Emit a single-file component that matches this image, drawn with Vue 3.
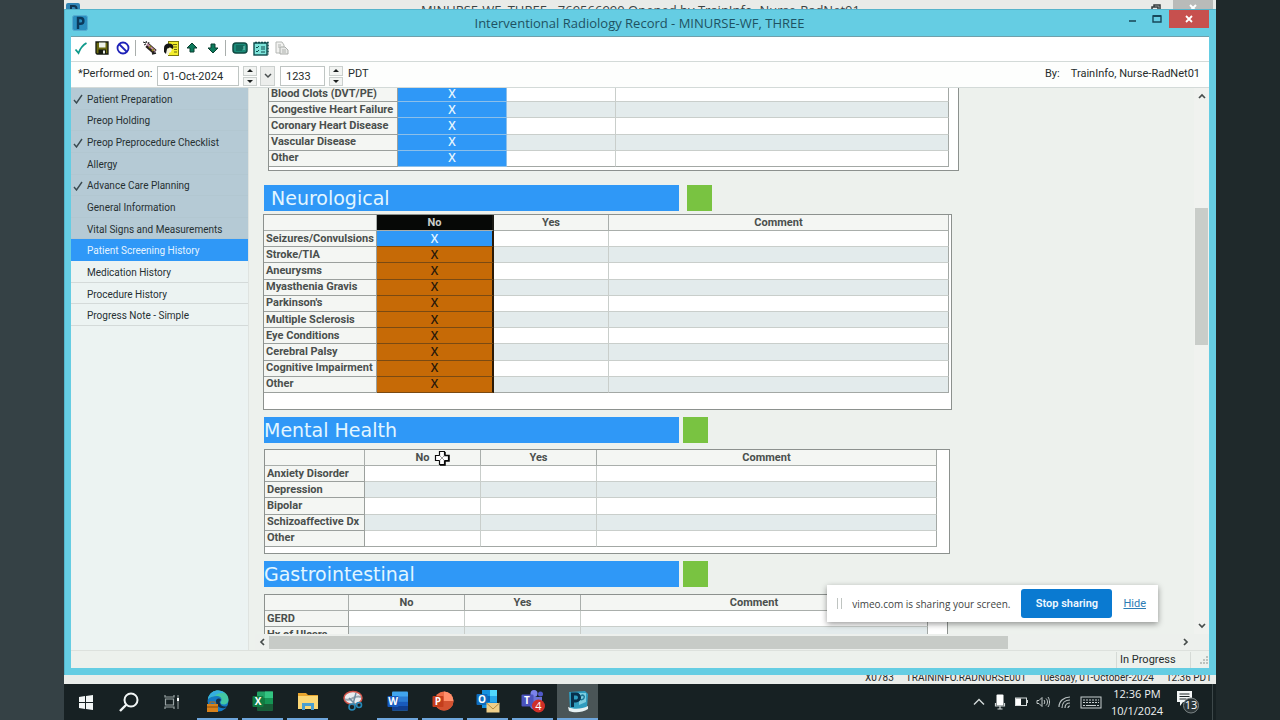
<script setup>
import { ref } from 'vue'

const performedDate = ref('01-Oct-2024')
const performedTime = ref('1233')

const navItems = [
  { label: 'Patient Preparation', done: true, visited: true },
  { label: 'Preop Holding', visited: true },
  { label: 'Preop Preprocedure Checklist', done: true, visited: true },
  { label: 'Allergy', visited: true },
  { label: 'Advance Care Planning', done: true, visited: true },
  { label: 'General Information', visited: true },
  { label: 'Vital Signs and Measurements', visited: true },
  { label: 'Patient Screening History', active: true },
  { label: 'Medication History' },
  { label: 'Procedure History' },
  { label: 'Progress Note - Simple' },
]

const sections = [
  {
    id: 'cardio',
    head: false,
    mark: 'blue',
    rows: ['Blood Clots (DVT/PE)', 'Congestive Heart Failure', 'Coronary Heart Disease', 'Vascular Disease', 'Other'],
  },
  {
    id: 'neuro',
    title: 'Neurological',
    head: true,
    mark: 'orange',
    rows: ['Seizures/Convulsions', 'Stroke/TIA', 'Aneurysms', 'Myasthenia Gravis', "Parkinson's", 'Multiple Sclerosis', 'Eye Conditions', 'Cerebral Palsy', 'Cognitive Impairment', 'Other'],
  },
  {
    id: 'mental',
    title: 'Mental Health',
    head: true,
    rows: ['Anxiety Disorder', 'Depression', 'Bipolar', 'Schizoaffective Dx', 'Other'],
  },
  {
    id: 'gastro',
    title: 'Gastrointestinal',
    head: true,
    rows: ['GERD', 'Hx of Ulcers'],
  },
]
</script>

<template>
  <div class="desktop">
    <div class="stage">
      <div class="back-title">
        <svg class="back-logo" width="14" height="14" viewBox="0 0 14 14"><rect width="14" height="14" rx="2" fill="#2f83b4" /><path d="M5 13V3h3a2.500 2.500 0 0 1 0 5H5" fill="none" stroke="#0d3551" stroke-width="2" /></svg>
        <span class="back-name">MINURSE-WF, THREE - 769566990 Opened by TrainInfo, Nurse-RadNet01</span>
        <svg class="back-restore" width="10" height="9" viewBox="0 0 10 9"><path d="M3 3V1h6v6H7M1 3h6v6H1z" fill="none" stroke="#333b3b" stroke-width="1.500" /></svg>
        <span class="back-close"><svg width="8" height="8" viewBox="0 0 8 8"><path d="M1 1l6 6M7 1L1 7" stroke="#fff" stroke-width="2" /></svg></span>
      </div>

      <section class="window">
        <header class="titlebar">
          <svg class="logo" width="16" height="16" viewBox="0 0 16 16"><rect x="0.500" y="0.500" width="15" height="15" rx="2" fill="#2b8fc0" stroke="#55abd0" /><path d="M6 14V3h2.500a2.800 2.800 0 0 1 0 5.800H6" fill="none" stroke="#0b3a5c" stroke-width="2.400" /></svg>
          <h1>Interventional Radiology Record - MINURSE-WF, THREE</h1>
          <div class="winbtns">
            <button type="button" aria-label="Minimize"><svg width="10" height="10" viewBox="0 0 10 10"><path d="M1 7h7" stroke="#2a6577" stroke-width="2" /></svg></button>
            <button type="button" aria-label="Maximize"><svg width="10" height="10" viewBox="0 0 10 10"><path d="M1 2h8v6H1z" fill="none" stroke="#17485a" stroke-width="1.400" /><path d="M1 2h8" stroke="#17485a" stroke-width="2" /></svg></button>
            <button type="button" class="close" aria-label="Close"><svg width="8" height="8" viewBox="0 0 8 8"><path d="M1 1l6 6M7 1L1 7" stroke="#fff" stroke-width="1.800" /></svg></button>
          </div>
        </header>

        <div class="client">
          <div class="toolbar">
            <button type="button" aria-label="Sign"><svg width="14" height="14" viewBox="0 0 14 14"><path d="M1.500 8.500L4.500 12C6 8 9 4 12.500 2" fill="none" stroke="#0f9a8c" stroke-width="1.800" /></svg></button>
            <button type="button" aria-label="Save"><svg width="14" height="14" viewBox="0 0 14 14"><path d="M1 1h12v12H2l-1-1z" fill="#6b6a10" stroke="#151a10" stroke-width="1.300" /><rect x="4" y="1.500" width="6.500" height="5" fill="#eef2ea" /><rect x="3.500" y="8.500" width="7.500" height="4.500" fill="#151a10" /><rect x="8" y="9.500" width="2" height="3" fill="#e8ece4" /></svg></button>
            <button type="button" aria-label="Cancel"><svg width="14" height="14" viewBox="0 0 14 14"><circle cx="7" cy="7" r="5.500" fill="none" stroke="#1f22b8" stroke-width="1.800" /><path d="M3 3l8 8" stroke="#1f22b8" stroke-width="1.800" /></svg></button>
            <i class="sep"></i>
            <button type="button" aria-label="Clear"><svg width="16" height="16" viewBox="0 0 16 16"><path d="M1 2l3 1M2 5l2-1M4 1l1 2M7 2l-1 2" stroke="#1d1d1d" stroke-width="1" /><path d="M5 5l8 7" stroke="#2a2020" stroke-width="5" /><path d="M5 4l8 7" stroke="#c28da0" stroke-width="2" /><path d="M7 8l2-2M10 11l2-2" stroke="#8d8b18" stroke-width="1.500" /><path d="M10 14l4-1" stroke="#1d1d1d" stroke-width="1.500" /></svg></button>
            <button type="button" aria-label="Patient notes"><svg width="16" height="15" viewBox="0 0 16 15"><rect x="5.500" y="0.500" width="10" height="14" fill="#f4ee2c" stroke="#79770f" /><path d="M10 3.500h4M11 6h3M11 8.500h3M11 11h3" stroke="#6a6810" stroke-width="1.200" /><path d="M1 11V7c0-3 2-4.500 5-4.500s4.500 1.500 4.500 4L9.500 8 7 6.500 4 8l-1 5z" fill="#161616" /><path d="M4 8l3-1.500L9 8l-1 3-2 1v2H4z" fill="#f7f5d5" /></svg></button>
            <button type="button" aria-label="Previous"><svg width="12" height="12" viewBox="0 0 12 12"><path d="M6 1l5 5H8v4H4V6H1z" fill="#0c7a5c" stroke="#0a3f30" /></svg></button>
            <button type="button" aria-label="Next"><svg width="12" height="12" viewBox="0 0 12 12"><path d="M6 11l5-5H8V2H4v4H1z" fill="#0c7a5c" stroke="#0a3f30" /></svg></button>
            <i class="sep"></i>
            <button type="button" aria-label="Keyboard"><svg width="16" height="12" viewBox="0 0 16 12"><rect x="1" y="1" width="14" height="10" rx="3" fill="#1b8a78" stroke="#0f4a42" stroke-width="1.500" /><path d="M4 4h8M4 6h8M4 8h6" stroke="#0f4a42" /><path d="M12 4v4" stroke="#8fd0c4" /></svg></button>
            <button type="button" aria-label="Task list"><svg width="16" height="15" viewBox="0 0 16 15"><rect x="1" y="2" width="13" height="12" fill="#7de4da" stroke="#0e4b4c" stroke-width="1.400" /><path d="M2 1.500h13v12" fill="none" stroke="#0e4b4c" stroke-dasharray="2 1" stroke-width="1.500" /><path d="M3 6l1 1 2-2M3 10l1 1 2-2" fill="none" stroke="#0e4b4c" /><path d="M8 6h4M8 8h4M8 11h4" stroke="#0e4b4c" /></svg></button>
            <button type="button" aria-label="Copy document"><svg width="14" height="14" viewBox="0 0 14 14"><path d="M1 1h6l2 3v8H1z" fill="#f2f2f0" stroke="#b5b8b5" /><path d="M5 6h5l3 3v4H5z" fill="#e9eae8" stroke="#a9aca9" /><path d="M3 4h3M3 6h2M7 9h4M7 11h4" stroke="#b0b3b0" /></svg></button>
          </div>

          <form class="performed" @submit.prevent>
            <label for="perf-date">*Performed on:</label>
            <input id="perf-date" v-model="performedDate" class="date" type="text" />
            <span class="spin"><button type="button" aria-label="Next day"><i class="up"></i></button><button type="button" aria-label="Previous day"><i class="down"></i></button></span>
            <button type="button" class="drop" aria-label="Open calendar"><svg width="8" height="6" viewBox="0 0 8 6"><path d="M1 1l3 3 3-3" fill="none" stroke="#4a5050" stroke-width="1.500" /></svg></button>
            <input id="perf-time" v-model="performedTime" class="time" type="text" aria-label="Time performed" />
            <span class="spin"><button type="button" aria-label="Later"><i class="up"></i></button><button type="button" aria-label="Earlier"><i class="down"></i></button></span>
            <span class="zone">PDT</span>
            <span class="by">By:</span>
            <span>TrainInfo, Nurse-RadNet01</span>
          </form>

          <div class="body">
            <nav class="sidebar">
              <ul>
                <li v-for="item in navItems" :key="item.label">
                  <a href="#" :class="{ visited: item.visited, active: item.active }">
                    <span class="tick"><svg v-if="item.done" width="10" height="10" viewBox="0 0 10 10"><path d="M1 6l2.500 3L9 1" fill="none" stroke="#3a4a50" stroke-width="1.400" /></svg></span>{{ item.label }}
                  </a>
                </li>
              </ul>
            </nav>

            <main class="pane">
              <div class="viewport">
                <section v-for="s in sections" :key="s.id" class="group" :class="s.id">
                  <div v-if="s.title" class="heading"><h2>{{ s.title }}</h2><span class="flag"></span></div>
                  <div class="box">
                    <table>
                      <colgroup><col class="c-label" /><col class="c-no" /><col class="c-yes" /><col /></colgroup>
                      <thead v-if="s.head">
                        <tr><th></th><th scope="col" :class="{ picked: s.mark === 'orange' }">No</th><th scope="col">Yes</th><th scope="col">Comment</th></tr>
                      </thead>
                      <tbody>
                        <tr v-for="(r, i) in s.rows" :key="r">
                          <th scope="row">{{ r }}</th>
                          <td :class="[s.mark, { first: i === 0 }]"><template v-if="s.mark">X</template></td>
                          <td></td>
                          <td></td>
                        </tr>
                      </tbody>
                    </table>
                  </div>
                </section>
                <svg class="cursor" width="16" height="16" viewBox="0 0 16 16"><path d="M5.500 1.500h5v4h4v5h-4v4h-5v-4h-4v-5h4z" fill="#fff" stroke="#0a0a0a" stroke-width="1.200" /><path d="M11 2v3.500h4V11h-4v4H6" fill="none" stroke="#0a0a0a" stroke-width="1.500" /><path d="M5.500 5.500l5 5M10.500 5.500l-5 5" stroke="#888" stroke-width="0.800" /></svg>
              </div>
              <div class="vscroll">
                <button type="button" aria-label="Scroll up"><svg width="8" height="6" viewBox="0 0 8 6"><path d="M1 5l3-3 3 3" fill="none" stroke="#464c4b" stroke-width="1.700" /></svg></button>
                <span class="vthumb"></span>
                <button type="button" aria-label="Scroll down"><svg width="8" height="6" viewBox="0 0 8 6"><path d="M1 1l3 3 3-3" fill="none" stroke="#464c4b" stroke-width="1.700" /></svg></button>
              </div>
              <div class="hscroll">
                <button type="button" aria-label="Scroll left"><svg width="6" height="8" viewBox="0 0 6 8"><path d="M5 1L2 4l3 3" fill="none" stroke="#464c4b" stroke-width="1.700" /></svg></button>
                <span class="htrack"><span class="hthumb"></span></span>
                <button type="button" aria-label="Scroll right"><svg width="6" height="8" viewBox="0 0 6 8"><path d="M1 1l3 3-3 3" fill="none" stroke="#464c4b" stroke-width="1.700" /></svg></button>
              </div>
            </main>
          </div>

          <footer class="status"><span class="state">In Progress</span><svg width="12" height="12" viewBox="0 0 12 12"><path d="M9 3h2M6 6h2M9 6h2M3 9h2M6 9h2M9 9h2" stroke="#bcc2be" stroke-width="2" /></svg></footer>
        </div>
      </section>

      <div class="back-status"><span>X0783</span><span>TRAININFO.RADNURSE001</span><span>Tuesday, 01-October-2024</span><span>12:36 PDT</span></div>

      <footer class="taskbar">
        <div class="sys">
          <button type="button" aria-label="Start"><svg width="16" height="16" viewBox="0 0 16 16"><path d="M1 3l6-1v6H1zM8 2l7-1v7H8zM1 9h6v6l-6-1zM8 9h7v7l-7-1z" fill="#f2f6f6" /></svg></button>
          <button type="button" aria-label="Search"><svg width="22" height="22" viewBox="0 0 22 22"><circle cx="13" cy="9" r="6.500" fill="none" stroke="#f2f6f6" stroke-width="2" /><path d="M8.500 13.500L2 20" stroke="#f2f6f6" stroke-width="2.400" /></svg></button>
          <button type="button" aria-label="Task view"><svg width="16" height="16" viewBox="0 0 16 16"><path d="M1 1v2h9V1M1 15v-2h9v2M1.500 5h8v6h-8z" fill="none" stroke="#99a3a4" stroke-width="1.200" /><path d="M14 1v14" stroke="#99a3a4" /><path d="M14 4v3" stroke="#fff" stroke-width="2" /></svg></button>
        </div>
        <div class="apps">
          <button type="button" class="run" aria-label="Edge"><svg width="24" height="24" viewBox="0 0 24 24"><circle cx="12" cy="12" r="10.500" fill="#1479c4" /><path d="M2 10C3 4 8 1.500 12 1.500c6 0 10.500 4 10.500 9 0 3-2 5-5 5-2 0-3-1-3-2 0-1 1-1 1-3 0-2-2-3.500-4.500-3.500C7 7 4 8 2 10z" fill="#43c7a2" /><path d="M2 10C3 4 8 1.500 12 1.500c3 0 5 1 7 3-5-1-8 0-10 2.500C6 7 4 8 2 10z" fill="#35aee0" /><path d="M10 12c0 5 4 8 9 7l3-2c-3 1-7 1-8-3-1-1 0-2 1-3-2-3-5-1-5 1z" fill="#12304a" /><path d="M1 15h11v8H1z" fill="#d8811b" /><path d="M4 15v-2h5v2" fill="none" stroke="#bd6a10" /><path d="M1 18h11" stroke="#8b4a0a" /></svg></button>
          <button type="button" class="run" aria-label="Excel"><svg width="22" height="20" viewBox="0 0 22 20"><rect x="5" y="0.500" width="16" height="19" rx="1" fill="#21a366" /><path d="M13 0.500h8V7h-8z" fill="#33c481" /><path d="M5 7h8v6H5z" fill="#107c41" /><path d="M5 13h16v6.500H5z" fill="#185c37" /><path d="M13 7h8v6h-8z" fill="#159454" /><rect x="0.500" y="5" width="11" height="11" rx="1" fill="#107c41" /><text x="6" y="14" text-anchor="middle">X</text></svg></button>
          <button type="button" class="run" aria-label="File Explorer"><svg width="22" height="20" viewBox="0 0 22 20"><path d="M1 2h8l2 2h10v14H1z" fill="#e8a52e" /><rect x="1" y="5" width="20" height="13" fill="#fbd775" /><path d="M5 19v-7h12v7h-3v-4H8v4z" fill="#4a9fd0" /></svg></button>
          <button type="button" aria-label="Snipping Tool"><svg width="22" height="22" viewBox="0 0 22 22"><ellipse cx="11" cy="8" rx="9" ry="6.500" fill="#e9edf0" stroke="#d2544a" stroke-width="1.500" /><path d="M3 9c3 2 6 0 8-1s5-2 8-1" fill="none" stroke="#9ba7b0" stroke-width="2" /><path d="M14 3l-3 11M7 8l8 8" stroke="#708ca0" stroke-width="1.500" /><circle cx="10" cy="17" r="3" fill="none" stroke="#2689b8" stroke-width="1.600" /><circle cx="17" cy="15" r="2.500" fill="none" stroke="#2689b8" stroke-width="1.600" /></svg></button>
          <button type="button" class="run" aria-label="Word"><svg width="22" height="20" viewBox="0 0 22 20"><rect x="5" y="0.500" width="16" height="19" rx="1" fill="#41a5ee" /><path d="M5 5.500h16v5H5z" fill="#2b7cd3" /><path d="M5 10.500h16v5H5z" fill="#185abd" /><path d="M5 15h16v4.500H5z" fill="#103f91" /><rect x="0.500" y="5" width="11" height="11" rx="1" fill="#185abd" /><text x="6" y="14" text-anchor="middle">W</text></svg></button>
          <button type="button" class="run" aria-label="PowerPoint"><svg width="22" height="20" viewBox="0 0 22 20"><circle cx="12" cy="10" r="9.500" fill="#ed6c47" /><path d="M12 0.500a9.500 9.500 0 0 1 9.500 9.500H12z" fill="#ff8f6b" /><path d="M2.500 10h19a9.500 9.500 0 0 1-19 0z" fill="#d35230" /><rect x="0.500" y="5" width="11" height="11" rx="1" fill="#c43e1c" /><text x="6" y="14" text-anchor="middle">P</text></svg></button>
          <button type="button" class="run" aria-label="Outlook"><svg width="24" height="24" viewBox="0 0 24 24"><rect x="6" y="1" width="15" height="18" fill="#1490df" /><path d="M14 1h7v6h-7z" fill="#50d9ff" /><path d="M6 7h8v6H6z" fill="#0364b8" /><path d="M14 7h7v6h-7z" fill="#28a8ea" /><rect x="0.500" y="5" width="11" height="11" rx="1" fill="#0f6cbd" /><text x="6" y="14" text-anchor="middle">O</text><rect x="10.500" y="14" width="13" height="9.500" fill="#f0cf8a" /><path d="M10.500 14l6.500 6 6.500-6" fill="none" stroke="#b78a3c" /></svg></button>
          <button type="button" class="run" aria-label="Teams"><svg width="24" height="24" viewBox="0 0 24 24"><circle cx="13" cy="4.500" r="3.500" fill="#7b83eb" /><circle cx="19.500" cy="5" r="2.500" fill="#5059c9" /><path d="M7 8h14v8c0 6-11 7-12 1z" fill="#6a72d6" /><rect x="0.500" y="5.500" width="12" height="12" rx="1" fill="#4b53bc" /><text x="6" y="15" text-anchor="middle">T</text><circle cx="17.500" cy="17" r="6.500" fill="#cf2f28" /><text x="17.500" y="21" class="count" text-anchor="middle">4</text></svg></button>
          <button type="button" class="run on" aria-label="PowerChart"><svg width="24" height="24" viewBox="0 0 24 24"><path d="M3 3l16-1 3 3-1 14-17 2z" fill="#2f9cbf" /><path d="M13 4h7v9l-7 3z" fill="#7ccde0" /><path d="M15 7c2-2 4 0 3 2s-3 2-4 1" fill="none" stroke="#1f7896" stroke-width="1.500" /><path d="M6.500 18V5h3.500a3.500 3.500 0 0 1 0 7H7" fill="none" stroke="#08304c" stroke-width="3" /><path d="M2 18c6 3 14 2 20-1v3c-6 4-14 4-19 2z" fill="#e6f1f3" /></svg></button>
        </div>
        <div class="tray">
          <svg width="14" height="10" viewBox="0 0 14 10"><path d="M2 7.500l5-5 5 5" fill="none" stroke="#d4dada" stroke-width="1.400" /></svg>
          <svg width="12" height="16" viewBox="0 0 12 16"><rect x="2.500" y="0.500" width="7" height="11" rx="1" fill="#fff" /><path d="M1.500 9v3h9V9M6 12v3M3.500 15h5" fill="none" stroke="#cfd5d5" stroke-width="1.200" /></svg>
          <svg width="14" height="10" viewBox="0 0 14 10"><rect x="1.500" y="1" width="11" height="7.500" fill="none" stroke="#d4dada" /><rect x="2" y="1.500" width="5" height="6.500" fill="#fff" /><path d="M13.500 3v3" stroke="#d4dada" /></svg>
          <svg width="14" height="12" viewBox="0 0 14 12"><path d="M1 4.500h2l3-3v9l-3-3H1z" fill="none" stroke="#c2c9c9" /><path d="M8 4c1 1.300 1 2.700 0 4M10 2.500c2 2 2 5 0 7M12 1c2 3 2 7 0 10" fill="none" stroke="#c2c9c9" /></svg>
          <svg width="14" height="13" viewBox="0 0 14 13"><path d="M1 11C1 5 6 1 12 1M4 12c0-5 3-8 8-8M7 12c0-3 2-5 5-5M10 12c0-1 1-2 2-2" fill="none" stroke="#b9c1c1" stroke-width="1.200" /></svg>
          <svg width="22" height="13" viewBox="0 0 22 13"><rect x="1" y="1" width="20" height="11" fill="none" stroke="#c8cfcf" /><path d="M3 4h16M3 6.500h16" stroke="#c8cfcf" stroke-dasharray="2 1" /><path d="M3 9.500h2M6 9.500h10M17 9.500h2" stroke="#c8cfcf" /></svg>
          <div class="clock"><span>12:36 PM</span><span>10/1/2024</span></div>
          <svg class="note" width="24" height="24" viewBox="0 0 24 24"><path d="M1 1h15v11H7l-3 4v-4H1z" fill="#f4f7f7" /><path d="M3.500 4h10M3.500 6.500h10M3.500 9h7" stroke="#1c2628" /><circle cx="15" cy="15.500" r="7.500" fill="#2c3537" stroke="#7b8485" /><text x="15" y="19" class="count" text-anchor="middle">13</text></svg>
        </div>
      </footer>
    </div>

    <aside class="share">
      <span class="grip"></span>
      <span class="msg">vimeo.com is sharing your screen.</span>
      <button type="button">Stop sharing</button>
      <a href="#">Hide</a>
    </aside>
  </div>
</template>

<style>
body { margin: 0; }
</style>

<style scoped>
* { box-sizing: border-box; }
button { border: 0; padding: 0; margin: 0; background: none; font: inherit; color: inherit; display: flex; align-items: center; justify-content: center; }
svg { display: block; flex: none; }
svg text { font: bold 10px "Open Sans", sans-serif; fill: #fff; }
svg text.count { font: 11px "Open Sans", sans-serif; }

.desktop { position: relative; height: 100vh; padding: 0 5%; overflow: hidden; background: linear-gradient(90deg, #354145 0 50%, #1f292b 50%); font-family: Roboto, "Noto Sans", sans-serif; font-size: 11px; color: #262c2c; }
.stage { height: 100%; display: flex; flex-direction: column; }

.back-title { height: 9px; flex: none; background: #e9ebe8; display: flex; align-items: flex-start; overflow: hidden; }
.back-logo { margin: 3px 0 0 2px; }
.back-name { flex: 1; padding-left: 50px; text-align: center; font-family: "Open Sans", sans-serif; font-size: 13px; line-height: 18px; white-space: nowrap; margin-top: 1px; color: #3d4443; }
.back-restore { margin: 4px 12px 0 0; }
.back-close { width: 40px; height: 9px; margin-right: 3px; background: #b9bbb9; display: flex; justify-content: center; padding-top: 4px; }

.window { flex: 1; min-height: 0; background: #65cde3; border: 1px solid #55b4cb; border-width: 1px 0 0 1px; padding: 0 7px 7px 6px; display: flex; flex-direction: column; }
.titlebar { height: 26px; flex: none; display: flex; align-items: center; padding-left: 1px; }
.titlebar h1 { flex: 1; margin: 0; padding-left: 70px; text-align: center; font-family: "Open Sans", sans-serif; font-size: 13px; line-height: 20px; font-weight: 400; color: #1e5262; white-space: nowrap; }
.winbtns { display: flex; align-self: flex-start; }
.winbtns button { width: 24px; height: 18px; }
.winbtns .close { width: 40px; background: #c7504e; }

.client { flex: 1; min-height: 0; display: flex; flex-direction: column; background: #edf1ed; border-top: 1px solid #6fa0ab; }
.toolbar { height: 25px; flex: none; background: #fff; border-bottom: 1px solid #d3dad8; display: flex; align-items: center; padding-bottom: 2px; }
.toolbar button { width: 21px; height: 20px; }
.toolbar button:first-child { width: 20px; }
.sep { width: 1px; height: 16px; margin: 0 3px 0 2px; background: #a9aeac; }

.performed { height: 26px; flex: none; background: #fdfefd; border-bottom: 1px solid #d3dad8; display: flex; align-items: center; padding: 0 9px 1px 7px; white-space: nowrap; line-height: 16px; }
.performed label { width: 79px; }
.performed input { height: 20px; align-self: flex-end; border: 1px solid #bfc5c3; background: #fff; font: inherit; color: inherit; padding: 0 5px; }
.performed .date { width: 82px; }
.performed .time { width: 45px; }
.spin { width: 14px; height: 20px; align-self: flex-end; margin: 0 3px 0 4px; display: flex; flex-direction: column; gap: 1px; }
.spin button { flex: 1; border: 1px solid #cbd0ce; background: #f2f4f2; }
.up, .down { border: 3px solid transparent; }
.up { border-top: 0; border-bottom-color: #1c2020; }
.down { border-bottom: 0; border-top-color: #1c2020; }
.drop { width: 15px; height: 20px; align-self: flex-end; margin-right: 5px; border: 1px solid #cbd0ce; background: #eceeec; }
.zone { margin-left: 2px; }
.by { margin-left: auto; padding-right: 11px; }

.body { flex: 1; min-height: 0; display: flex; }
.sidebar { width: 178px; flex: none; background: #ecf3f2; border-right: 1px solid #dfe3e0; font-size: 10px; }
.sidebar ul { list-style: none; margin: 0; padding: 0; height: 238px; display: grid; grid-auto-rows: 1fr; }
.sidebar a { height: 100%; display: flex; align-items: center; padding-top: 2px; color: #263032; text-decoration: none; border-bottom: 1px solid #d4dad9; white-space: nowrap; }
.sidebar a.visited { background: #b5cad5; border-color: #b2c7d1; }
.sidebar a.active { background: #2f98f7; border-color: #2f98f7; color: #e4f3ff; }
.tick { width: 16px; padding-left: 2px; flex: none; }

.pane { flex: 1; min-width: 0; margin-left: 6px; display: grid; grid-template: minmax(0, 1fr) 16px / minmax(0, 1fr) 15px; }
.viewport { position: relative; overflow: hidden; padding-left: 8px; }
.cursor { position: absolute; left: 179px; top: 362px; }

.heading { display: flex; height: 26px; }
.heading h2 { width: 415px; margin: 0; background: #2f98f7; color: #e2f6ff; font: 400 19px/26px "DejaVu Sans", Verdana, sans-serif; }
.flag { width: 25px; background: #79c341; margin-left: 4px; }
.box { background: #fff; border: 1px solid #8c918e; margin-top: 4px; }
table { table-layout: fixed; border-collapse: separate; border-spacing: 0; font: bold 11px/13px Roboto, Arial, sans-serif; color: #4a4f4d; }
th, td { height: 16px; padding: 0 0 1px; overflow: hidden; white-space: nowrap; text-align: center; border-right: 1px solid #c9cecb; border-bottom: 1px solid #c9cecb; }
thead th { background: #f4f6f3; border-color: #a9aeab; }
tbody th { background: #f4f6f3; text-align: left; padding-left: 2px; border-color: #9ba09d; }
tbody td { font: 600 12px/13px "Open Sans", sans-serif; }
tbody tr:nth-child(even) td { background: #e3ebec; }
tbody td:last-child, thead th:last-child { border-right-color: #a3a8a5; }
tbody tr:last-child td { border-bottom-color: #a3a8a5; }
tbody tr td.blue { background: #2f98f7; color: #e6f6ff; border-color: #8cbfe9; }
thead th.picked { background: #060806; color: #c9cdca; border-right: 2px solid #1a1a14; }
tbody tr td.orange { background: #c66a06; color: #26170a; border-right: 2px solid #2b1a08; border-bottom-color: #7a4a12; }
tbody tr td.orange.first { background: #2f98f7; color: #e6f6ff; }

.cardio .box { width: 691px; height: 86px; margin: -3px 0 0 5px; }
.cardio table { width: 680px; height: 81px; }
.cardio .c-label { width: 129px; }
.cardio .c-no, .cardio .c-yes { width: 109px; }
.cardio { padding-bottom: 14px; }

.neuro .heading, .mental .heading, .gastro .heading { margin-left: 1px; }
.neuro h2 { padding-left: 7px; }
.neuro .flag { margin-left: 8px; }
.neuro .box { width: 689px; height: 196px; margin-top: 3px; }
.neuro table { width: 685px; height: 178px; }
.neuro .c-label { width: 113px; }
.neuro .c-no { width: 117px; }
.neuro .c-yes { width: 115px; }
.neuro { padding-bottom: 7px; }

.mental .box { width: 686px; height: 105px; margin: 6px 0 0 1px; }
.mental table { width: 672px; height: 97px; }
.mental .c-label { width: 100px; }
.mental .c-no, .mental .c-yes { width: 116px; }
.mental { padding-bottom: 7px; }

.gastro .box { width: 684px; height: 57px; margin: 7px 0 0 1px; }
.gastro table { width: 663px; height: 48px; }
.gastro .c-label { width: 84px; }
.gastro .c-no, .gastro .c-yes { width: 116px; }

.vscroll { display: flex; flex-direction: column; background: #f0f2ef; }
.vscroll button { height: 16px; flex: none; }
.vthumb { height: 25%; margin: 104px 1px auto; background: #c9cdc9; }
.hscroll { grid-column: 1 / -1; display: flex; background: #edf0ed; }
.hscroll button { width: 14px; flex: none; }
.hscroll button:last-child { width: 46px; }
.htrack { flex: 1; padding: 2px 4px 1px 0; display: flex; }
.hthumb { width: 83%; background: #c7cbc7; }

.status { height: 18px; flex: none; border-top: 1px solid #dde1dd; display: flex; align-items: center; justify-content: flex-end; line-height: 16px; }
.state { width: 75px; padding-left: 3px; border-left: 1px solid #d5dad6; border-right: 1px solid #d5dad6; margin-right: 6px; }

.back-status { height: 9px; flex: none; overflow: hidden; background: #eaedea; display: flex; justify-content: flex-end; padding-right: 4px; gap: 12px; font-size: 10px; line-height: 16px; white-space: nowrap; }
.back-status span { margin-top: -5px; }

.taskbar { height: 36px; flex: none; background: #172123; display: flex; color: #eef2f2; }
.sys, .apps { display: flex; }
.apps { margin-left: 2px; }
.sys button { width: 43px; }
.apps button { width: 41px; margin: 0 2px; border-bottom: 2px solid transparent; }
.apps .run { border-bottom-color: #6ea6dc; }
.apps .on { background: #4a5557; }
.tray { margin-left: auto; display: flex; align-items: center; gap: 8px; padding-right: 12px; border-right: 1px solid #3d484a; margin-right: 3px; }
.clock { width: 54px; display: flex; flex-direction: column; align-items: center; font-family: "Open Sans", sans-serif; line-height: 17px; }
.note { margin-left: 4px; }

.share { position: absolute; right: 122px; bottom: 98px; height: 37px; display: flex; align-items: center; padding: 0 12px 0 10px; background: #fff; box-shadow: 0 2px 6px rgba(0, 0, 0, 0.4); white-space: nowrap; }
.grip { width: 5px; height: 11px; border: 1px solid #bfc4c1; border-width: 0 1px; margin-right: 10px; }
.msg { font-family: "Open Sans", sans-serif; font-size: 10px; color: #3e4343; }
.share button { width: 91px; height: 29px; margin: 0 11px; border-radius: 3px; background: #0a7ad1; color: #f0f8ff; font-weight: 600; }
.share a { color: #2c7cb5; }
</style>
